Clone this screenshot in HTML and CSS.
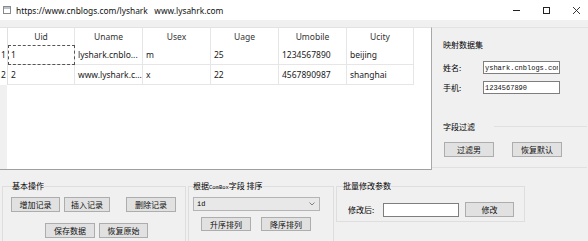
FILE: index.html
```html
<!DOCTYPE html>
<html>
<head>
<meta charset="utf-8">
<link rel="stylesheet" href="styles.css">
</head>
<body>
<div class="window">
  <div class="titlebar">
    <svg class="app-icon" width="8" height="8" viewBox="0 0 8 8"><rect x="0.5" y="0.5" width="7" height="7" fill="#fff" stroke="#8a8a8a"/><rect x="1" y="1" width="6" height="2" fill="#b9c3cc"/></svg>
    <span class="title">https://www.cnblogs.com/lyshark   www.lysahrk.com</span>
    <div class="controls">
      <svg width="7" height="7" viewBox="0 0 7 7"><line x1="0" y1="3.5" x2="7" y2="3.5" stroke="#222" stroke-width="1"/></svg>
      <svg width="7" height="7" viewBox="0 0 7 7"><rect x="0.5" y="0.5" width="6" height="6" fill="none" stroke="#222" stroke-width="1"/></svg>
      <svg width="7" height="7" viewBox="0 0 7 7"><path d="M0 0L7 7M7 0L0 7" stroke="#222" stroke-width="0.9"/></svg>
    </div>
  </div>

  <div class="main">
    <div class="grid-wrap">
      <div class="grid">
        <div class="hc vh"></div>
        <div class="hc">Uid</div>
        <div class="hc">Uname</div>
        <div class="hc">Usex</div>
        <div class="hc">Uage</div>
        <div class="hc">Umobile</div>
        <div class="hc">Ucity</div>

        <div class="cell vh">1</div>
        <div class="cell current">1</div>
        <div class="cell">lyshark.cnblo...</div>
        <div class="cell">m</div>
        <div class="cell">25</div>
        <div class="cell">1234567890</div>
        <div class="cell">beijing</div>

        <div class="cell vh">2</div>
        <div class="cell">2</div>
        <div class="cell">www.lyshark.c...</div>
        <div class="cell">x</div>
        <div class="cell">22</div>
        <div class="cell">4567890987</div>
        <div class="cell">shanghai</div>
      </div>
    </div>

    <div class="side">
      <div class="map">
        <div class="map-title">映射数据集</div>
        <div class="form-row first">
          <span class="lbl">姓名:</span>
          <input class="edit" type="text" value="yshark.cnblogs.com">
        </div>
        <div class="form-row">
          <span class="lbl">手机:</span>
          <input class="edit" type="text" value="1234567890">
        </div>
      </div>
      <div class="filter">
        <div class="filter-head">
          <span class="filter-title">字段过滤</span>
          <span class="filter-line"></span>
        </div>
        <div class="btn-row">
          <button class="btn w50">过滤男</button>
          <button class="btn w50">恢复默认</button>
        </div>
      </div>
    </div>
  </div>

  <div class="bottom">
    <fieldset class="grp g1">
      <legend>基本操作</legend>
      <div class="row1">
        <button class="btn b-add">增加记录</button>
        <button class="btn b-ins">插入记录</button>
        <button class="btn b-del">删除记录</button>
      </div>
      <div class="row2">
        <button class="btn b-save">保存数据</button>
        <button class="btn b-rest">恢复原始</button>
      </div>
    </fieldset>

    <fieldset class="grp g2">
      <legend>根据<span class="mini">ComBox</span>字段 排序</legend>
      <div class="combo">
        <span class="combo-text">id</span>
        <svg class="chev" width="6" height="4" viewBox="0 0 6 4"><path d="M0.5 0.5L3 3L5.5 0.5" fill="none" stroke="#666" stroke-width="0.8"/></svg>
      </div>
      <div class="sort-row">
        <button class="btn w50">升序排列</button>
        <button class="btn w50">降序排列</button>
      </div>
    </fieldset>

    <fieldset class="grp g3">
      <legend>批量修改参数</legend>
      <div class="mod-row">
        <span class="mod-lbl">修改后:</span>
        <input class="edit mod-edit" type="text" value="">
        <button class="btn mod-btn">修改</button>
      </div>
    </fieldset>
  </div>
</div>
</body>
</html>
```

FILE: styles.css
```css
* { box-sizing: border-box; }
html, body { margin: 0; padding: 0; }
body {
  width: 588px;
  height: 241px;
  overflow: hidden;
  background: #f0f0f0;
  font-family: "Noto Sans CJK SC", "Noto Sans", sans-serif;
  font-size: 8px;
  color: #000;
}
.window {
  width: 588px;
  height: 241px;
  display: flex;
  flex-direction: column;
  background: #f0f0f0;
}

/* title bar */
.titlebar {
  flex: none;
  height: 20px;
  background: #fff;
  display: flex;
  align-items: center;
}
.app-icon { margin-left: 3px; flex: none; }
.title {
  margin-left: 5px;
  font-family: "Noto Sans", sans-serif;
  font-size: 8.4px;
  color: #111;
  white-space: pre;
}
.controls {
  margin-left: auto;
  margin-right: 8px;
  display: flex;
  align-items: center;
  gap: 23px;
}

/* main area */
.main {
  flex: none;
  margin-top: 7px;
  height: 143px;
  display: flex;
}
.grid-wrap {
  width: 431px;
  height: 143px;
  border-top: 1px solid #e2e2e2;
  border-bottom: 1px solid #a0a0a0;
  background: linear-gradient(to right, #f0f0f0 7px, #fff 7px);
}
.grid {
  display: grid;
  grid-template-columns: 8px 67px 68px 68px 68px 68px 67px;
  grid-template-rows: 17px 20px 20px;
  width: 414px;
  background: #fff;
  font-family: "Noto Sans", sans-serif;
  font-size: 8.5px;
  color: #1a1a1a;
}
.hc {
  border-right: 1px solid #e6e6e6;
  text-align: center;
  line-height: 17px;
  color: #333;
}
.cell {
  border-right: 1px solid #e6e6e6;
  border-bottom: 1px solid #e6e6e6;
  line-height: 19px;
  padding-left: 3px;
  white-space: nowrap;
  overflow: hidden;
}
.vh {
  padding-left: 1px;
  border-right: 1px solid #e0e0e0;
}
.cell.vh { border-bottom: none; }
.current {
  outline: 1px dashed #555;
  outline-offset: -1px;
}

/* side panel */
.side {
  flex: 1;
  height: 143px;
  border-left: 1px solid #a8a8a8;
  border-top: 1px solid #e2e2e2;
  display: flex;
  flex-direction: column;
}
.map { padding-left: 11px; }
.map-title {
  margin-top: 11px;
  line-height: 12px;
}
.form-row {
  display: flex;
  align-items: center;
  margin-top: 7px;
  height: 13px;
}
.form-row.first { margin-top: 10px; }
.lbl { width: 40px; flex: none; }
.edit {
  width: 77px;
  height: 13px;
  margin: 0;
  padding: 0 1px;
  border: 1px solid #7e7e7e;
  background: #fff;
  font-family: "Liberation Mono", monospace;
  font-size: 7px;
  color: #111;
  outline: none;
}

.filter {
  margin-top: 26px;
  height: 48px;
  border-bottom: 1px solid #e0e0e0;
  margin-right: 1px;
}
.filter-head {
  display: flex;
  align-items: center;
  height: 12px;
  padding-left: 11px;
}
.filter-line {
  flex: 1;
  height: 1px;
  margin-left: 19px;
  background: #e0e0e0;
}
.btn-row {
  display: flex;
  gap: 18px;
  margin: 10px 0 0 12px;
}

.btn {
  height: 15px;
  margin: 0;
  padding: 0;
  background: #e1e1e1;
  border: 1px solid #adadad;
  font-family: "Noto Sans CJK SC", sans-serif;
  font-size: 8px;
  color: #111;
  display: flex;
  align-items: center;
  justify-content: center;
  flex: none;
}
.w50 { width: 50px; }

/* group boxes */
fieldset.grp {
  margin: 0;
  padding: 0;
  border: 1px solid #dedede;
  min-width: 0;
}
.grp legend {
  padding: 0;
  line-height: 12px;
  height: 12px;
  color: #000;
}

/* bottom */
.bottom {
  flex: 1;
  display: flex;
  align-items: flex-start;
}
.g1 {
  margin: 10px 0 0 2px !important;
  width: 184px;
  height: 62px;
}
.g1 legend { margin-left: 9px; }
.row1 { display: flex; margin-top: 5px; }
.b-add { margin-left: 8px; width: 49px; }
.b-ins { margin-left: 4px; width: 46px; }
.b-del { margin-left: 16px; width: 50px; }
.row2 { display: flex; margin-top: 11px; }
.b-save { margin-left: 42px; width: 50px; }
.b-rest { margin-left: 4px; width: 49px; }

.g2 {
  margin: 10px 0 0 2px !important;
  width: 146px;
  height: 62px;
}
.g2 legend { margin-left: 4px; }
.mini {
  font-family: "Liberation Mono", monospace;
  font-size: 5.5px;
}
.combo {
  margin: 5px 0 0 4px;
  width: 127px;
  height: 14px;
  background: #e8e8e8;
  border: 1px solid #b4b4b4;
  display: flex;
  align-items: center;
  padding: 0 4px 0 3px;
}
.combo-text {
  font-family: "Liberation Mono", monospace;
  font-size: 7px;
  flex: 1;
}
.sort-row {
  display: flex;
  gap: 10px;
  margin: 6px 0 0 12px;
}
.sort-row .btn { height: 14px; }

.g3 {
  margin: 10px 0 0 2px !important;
  width: 189px;
  height: 42px;
}
.g3 legend { margin-left: 6px; }
.mod-row {
  display: flex;
  align-items: center;
  margin-top: 10px;
  height: 15px;
}
.mod-lbl { margin-left: 11px; width: 35px; }
.mod-edit { width: 76px; height: 14px; }
.mod-btn { margin-left: 6px; width: 49px; }
```
